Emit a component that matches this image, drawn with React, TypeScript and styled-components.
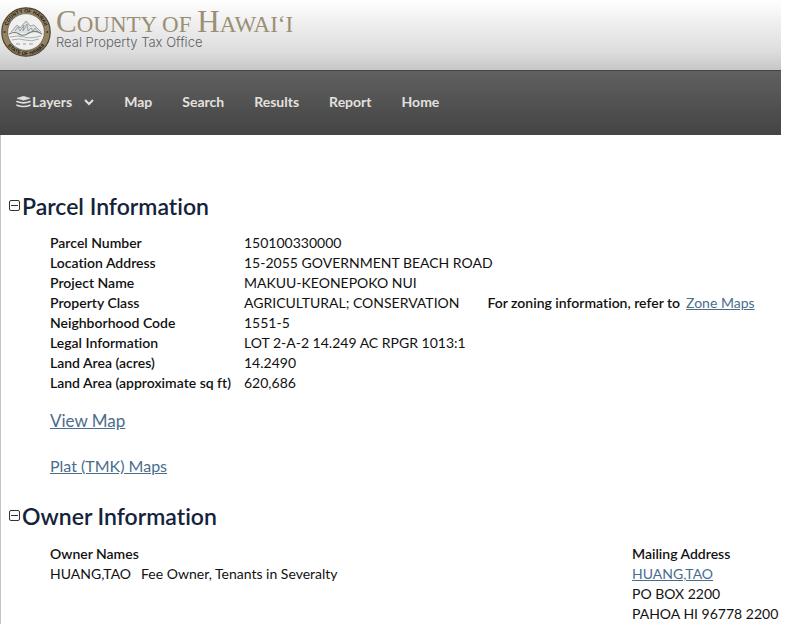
import React from 'react';
import styled, { createGlobalStyle } from 'styled-components';

const GlobalStyle = createGlobalStyle`
  * { box-sizing: border-box; }
  body {
    margin: 0;
    background: #fff;
    color: #111;
    font-family: Lato, "Open Sans", sans-serif;
    font-size: 14px;
    font-weight: 400;
    font-variant-ligatures: none;
    line-height: 20px;
    overflow: hidden;
  }
`;

const Top = styled.div`
  margin-right: 30px;
`;

const Banner = styled.header`
  display: flex;
  gap: 4px;
  height: 70px;
  padding: 6px 0 0;
  background: linear-gradient(#fff 0%, #f3f3f3 25%, #dcdcdc 75%, #c6c6c6 100%);
`;

const Brand = styled.div`
  padding-top: 9px;
`;

const BrandName = styled.div`
  color: #9a8f74;
  font-family: "Liberation Serif", serif;
  font-size: 23px;
  line-height: 20px;
  white-space: nowrap;
`;

const Initial = styled.span`
  font-size: 31px;
  line-height: 0;
`;

const BrandOffice = styled.div`
  color: #5f6065;
  font-family: Inter, sans-serif;
  font-size: 13px;
  font-weight: 300;
  line-height: 14px;
`;

const Nav = styled.nav`
  display: flex;
  align-items: center;
  gap: 30px;
  height: 65px;
  padding: 0 0 2px 16px;
  border-top: 1px solid #444;
  background: linear-gradient(#606060, #444);
`;

const NavLink = styled.a`
  color: #e3e1df;
  font-weight: 700;
  text-decoration: none;
`;

const NavButton = styled.button`
  display: flex;
  align-items: center;
  gap: 1px;
  padding: 0;
  border: 0;
  background: none;
  color: #e3e1df;
  font: inherit;
  font-weight: 700;
`;

const Chevron = styled.svg`
  margin-left: 11px;
`;

const Main = styled.main`
  padding: 57px 8px 0;
  border-left: 1px solid #c4c4c4;
`;

const SectionHead = styled.div`
  display: flex;
  align-items: center;
  gap: 2px;
  height: 28px;
`;

const Toggle = styled.button`
  display: flex;
  padding: 0;
  border: 0;
  background: none;
`;

const Title = styled.h2`
  margin: 0;
  color: #14233a;
  font-size: 23px;
  font-weight: 600;
  line-height: 28px;
`;

const Body = styled.div`
  padding: 13px 0 0 41px;
`;

const Details = styled.table`
  border-collapse: collapse;

  th, td {
    padding: 0;
    text-align: left;
    white-space: nowrap;
  }
  th {
    width: 194px;
    font-weight: 600;
  }
`;

const Zoning = styled.span`
  margin-left: 28px;
  font-weight: 600;
`;

const Link = styled.a<{ $size?: number }>`
  color: #4a6d8c;
  font-size: ${({ $size }) => $size ?? 14}px;
  font-weight: 400;
`;

const ZoneLink = styled(Link)`
  margin-left: 6px;
`;

const MapLinks = styled.div`
  display: flex;
  flex-direction: column;
  align-items: flex-start;
  gap: 25px;
  padding: 18px 0 26px;
`;

const Owners = styled.div`
  display: grid;
  grid-template-columns: 1fr 171px;
  padding-top: 1px;
`;

const Label = styled.div`
  font-weight: 600;
`;

const OwnerLine = styled.div`
  display: flex;
  gap: 10px;
`;

const Address = styled.address`
  font-style: normal;
  white-space: nowrap;
`;

const details: [string, string][] = [
  ['Parcel Number', '150100330000'],
  ['Location Address', '15-2055 GOVERNMENT BEACH ROAD'],
  ['Project Name', 'MAKUU-KEONEPOKO NUI'],
  ['Property Class', 'AGRICULTURAL; CONSERVATION'],
  ['Neighborhood Code', '1551-5'],
  ['Legal Information', 'LOT 2-A-2 14.249 AC RPGR 1013:1'],
  ['Land Area (acres)', '14.2490'],
  ['Land Area (approximate sq ft)', '620,686'],
];

const Seal = () => (
  <svg width="52" height="52" viewBox="0 0 52 52" aria-label="County seal">
    <defs>
      <path id="seal-top" d="M6.5 26a19.5 19.5 0 0 1 39 0" />
      <path id="seal-bottom" d="M3 26a23 23 0 0 0 46 0" />
    </defs>
    <circle cx="26" cy="26" r="24.2" fill="#938364" stroke="#4d422f" strokeWidth="1.2" />
    <circle cx="26" cy="26" r="18.4" fill="#f0f0ee" stroke="#655a48" strokeWidth=".8" />
    <g fontFamily="Liberation Sans, sans-serif" fontSize="5" fontWeight="700" fill="#1a1610" textAnchor="middle">
      <text><textPath href="#seal-top" startOffset="50%">COUNTY OF HAWAII</textPath></text>
      <text><textPath href="#seal-bottom" startOffset="50%">STATE OF HAWAII</textPath></text>
    </g>
    <circle cx="4.6" cy="26" r="1" fill="#3b3225" />
    <circle cx="47.4" cy="26" r="1" fill="#3b3225" />
    <path d="M10 27l7-8 4 2 5-6 5 5 4-1 7 8z" fill="#dcdfdf" />
    <path d="M11 26l6-7 3 3 6-7 4 5 4-1 7 7M15 25l3-4 2 4 4-6-1 6 4-7 1 7 3-3 2 3 2-3 3 4" fill="none" stroke="#828a8c" strokeWidth=".7" />
    <path d="M9 28q6-3 10 0t10-1 13 1" fill="none" stroke="#6e7779" strokeWidth="1.1" />
    <path d="M10 31q8-2 14 0t17-1M12 34q7-2 13 0t14-1" fill="none" stroke="#a0a6a8" strokeWidth=".9" />
    <path d="M16 38h4m3 0h3m3 0h4" fill="none" stroke="#999d9d" strokeWidth="1" />
  </svg>
);

const LayersIcon = () => (
  <svg width="15" height="12" viewBox="0 0 15 12" aria-hidden="true">
    <path d="M7.5 .3L14 2.3 7.5 4.3 1 2.3z" fill="#e3e1df" stroke="#e3e1df" strokeWidth=".6" strokeLinejoin="round" />
    <path d="M1 5.6q6.5 2.6 13 0M1 9.2q6.5 2.6 13 0" fill="none" stroke="#e3e1df" strokeWidth="1.6" strokeLinecap="round" />
  </svg>
);

const Section = ({ title, children }: { title: string; children: React.ReactNode }) => (
  <section>
    <SectionHead>
      <Toggle type="button" aria-label={`Collapse ${title}`}>
        <svg width="11" height="12" viewBox="0 0 11 12" aria-hidden="true">
          <rect x=".5" y=".5" width="10" height="10" rx="1.5" fill="#fff" stroke="#333" />
          <path d="M2 5.5h7" stroke="#333" />
        </svg>
      </Toggle>
      <Title>{title}</Title>
    </SectionHead>
    <Body>{children}</Body>
  </section>
);

export default function App() {
  return (
    <>
      <GlobalStyle />
      <Top>
        <Banner>
          <Seal />
          <Brand>
            <BrandName><Initial>C</Initial>OUNTY OF <Initial>H</Initial>AWAIʻI</BrandName>
            <BrandOffice>Real Property Tax Office</BrandOffice>
          </Brand>
        </Banner>
        <Nav>
          <NavButton type="button">
            <LayersIcon />
            Layers
            <Chevron width="10" height="8" viewBox="1 0 10 8" aria-hidden="true">
              <path d="M2 2l4 4 4-4" fill="none" stroke="#e3e1df" strokeWidth="2" />
            </Chevron>
          </NavButton>
          {['Map', 'Search', 'Results', 'Report', 'Home'].map((item) => (
            <NavLink key={item} href="#">{item}</NavLink>
          ))}
        </Nav>
      </Top>
      <Main>
        <Section title="Parcel Information">
          <Details>
            <tbody>
              {details.map(([name, value]) => (
                <tr key={name}>
                  <th scope="row">{name}</th>
                  <td>
                    {value}
                    {name === 'Property Class' && (
                      <Zoning>
                        For zoning information, refer to
                        <ZoneLink href="#">Zone Maps</ZoneLink>
                      </Zoning>
                    )}
                  </td>
                </tr>
              ))}
            </tbody>
          </Details>
          <MapLinks>
            <Link href="#" $size={17}>View Map</Link>
            <Link href="#" $size={16}>Plat (TMK) Maps</Link>
          </MapLinks>
        </Section>
        <Section title="Owner Information">
          <Owners>
            <div>
              <Label>Owner Names</Label>
              <OwnerLine><span>HUANG,TAO</span><span>Fee Owner, Tenants in Severalty</span></OwnerLine>
            </div>
            <div>
              <Label>Mailing Address</Label>
              <Address>
                <Link href="#">HUANG,TAO</Link><br />
                PO BOX 2200<br />
                PAHOA HI 96778 2200
              </Address>
            </div>
          </Owners>
        </Section>
      </Main>
    </>
  );
}
